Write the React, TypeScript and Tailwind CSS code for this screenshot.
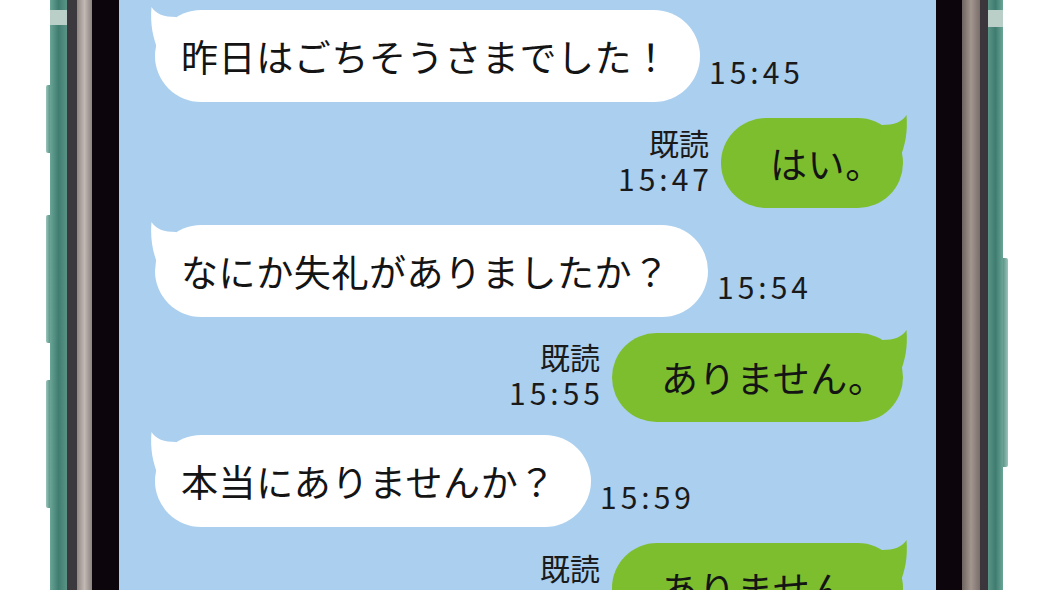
import React from 'react';

type Msg = {
  side: 'in' | 'out';
  text: string;
  time: string;
  width: string;
  height: string;
  mt: string;
};

const messages: Msg[] = [
  { side: 'in', text: '昨日はごちそうさまでした！', time: '15:45', width: 'w-[545px]', height: 'h-[92px]', mt: 'mt-[10px]' },
  { side: 'out', text: 'はい。', time: '15:47', width: 'w-[182px]', height: 'h-[90px]', mt: 'mt-[16px]' },
  { side: 'in', text: 'なにか失礼がありましたか？', time: '15:54', width: 'w-[553px]', height: 'h-[92px]', mt: 'mt-[17px]' },
  { side: 'out', text: 'ありません。', time: '15:55', width: 'w-[291px]', height: 'h-[89px]', mt: 'mt-[16px]' },
  { side: 'in', text: '本当にありませんか？', time: '15:59', width: 'w-[436px]', height: 'h-[92px]', mt: 'mt-[13px]' },
  { side: 'out', text: 'ありません。', time: '16:01', width: 'w-[291px]', height: 'h-[90px]', mt: 'mt-[16px]' },
];

const jp = { fontFamily: '"Noto Sans CJK JP", "Noto Sans", sans-serif' };

// little horn on the top corner of a bubble
const Tail: React.FC<{ fill: string; right?: boolean }> = ({ fill, right }) => (
  <svg
    width="34"
    height="44"
    viewBox="0 0 34 44"
    className={right ? 'absolute -right-[5px] -top-[4px] -scale-x-100' : 'absolute -left-[5px] -top-[4px]'}
  >
    <path d="M 8 44 C 3 32, 0 18, 1.5 1 C 6 8, 14 11, 26 11 L 34 44 Z" fill={fill} />
  </svg>
);

const Bubble: React.FC<{ msg: Msg }> = ({ msg }) => {
  const out = msg.side === 'out';
  return (
    <div
      className={`relative ${msg.width} ${msg.height} shrink-0 rounded-full flex items-center text-[37px] leading-none tracking-[0.6px] text-[#141414] ${
        out ? 'bg-[#7dbe2e] pl-[49px]' : 'bg-white pl-[26px]'
      }`}
    >
      <Tail fill={out ? '#7dbe2e' : '#ffffff'} right={out} />
      <span className="relative whitespace-nowrap">{msg.text}</span>
    </div>
  );
};

const Row: React.FC<{ msg: Msg }> = ({ msg }) => {
  if (msg.side === 'in') {
    return (
      <div className={`flex items-end gap-[9px] pl-[36px] ${msg.mt}`}>
        <Bubble msg={msg} />
        <span className="mb-[13px] text-[30px] leading-[36px] tracking-[4px] text-[#1a1a1a]">{msg.time}</span>
      </div>
    );
  }
  return (
    <div className={`flex items-end justify-end gap-[12px] pr-[33px] ${msg.mt}`}>
      <div className="mb-[12px] flex flex-col items-end text-[30px] leading-[36px] text-[#1a1a1a]">
        <span>既読</span>
        <span className="-mr-[4px] tracking-[4px]">{msg.time}</span>
      </div>
      <Bubble msg={msg} />
    </div>
  );
};

export default function App() {
  return (
    <div className="flex h-[590px] w-[1050px] overflow-hidden bg-white" style={jp}>
      {/* left side buttons */}
      <div className="flex w-[50px] shrink-0 flex-col items-end">
        <div className="mt-[85px] h-[68px] w-[4px] rounded-l-[2px] bg-linear-to-r from-[#9cc4b9] to-[#5c968a]" />
        <div className="mt-[62px] h-[128px] w-[4px] rounded-l-[2px] bg-linear-to-r from-[#9cc4b9] to-[#5c968a]" />
        <div className="mt-[37px] h-[128px] w-[4px] rounded-l-[2px] bg-linear-to-r from-[#9cc4b9] to-[#5c968a]" />
      </div>
      {/* left frame */}
      <div className="flex w-[17px] shrink-0 flex-col bg-linear-to-r from-[#6aa597] via-[#3f7d70] to-[#5a9487]">
        <div className="mt-[10px] h-[15px] bg-[#b9cfc8]" />
      </div>
      <div className="w-[10px] shrink-0 bg-[#3b383e]" />
      <div className="w-[15px] shrink-0 bg-linear-to-r from-[#8f8783] via-[#c3b9b4] to-[#8b837f]" />
      <div className="w-[27px] shrink-0 bg-[#0c050c]" />

      {/* screen */}
      <div className="flex w-[817px] shrink-0 flex-col bg-[#abcfee]">
        {messages.map((m, i) => (
          <Row key={i} msg={m} />
        ))}
      </div>

      {/* right frame */}
      <div className="w-[26px] shrink-0 bg-[#0c050c]" />
      <div className="w-[18px] shrink-0 bg-linear-to-r from-[#6f6461] via-[#a3968f] to-[#7a6e6a]" />
      <div className="w-[8px] shrink-0 bg-[#3b363b]" />
      <div className="flex w-[15px] shrink-0 flex-col bg-linear-to-r from-[#5a9487] via-[#3f7d70] to-[#6aa597]">
        <div className="mt-[10px] h-[17px] bg-[#b9cfc8]" />
      </div>
      <div className="flex w-[47px] shrink-0 flex-col items-start">
        <div className="mt-[258px] h-[209px] w-[5px] rounded-r-[2px] bg-linear-to-r from-[#5c968a] to-[#9cc4b9]" />
      </div>
    </div>
  );
}
